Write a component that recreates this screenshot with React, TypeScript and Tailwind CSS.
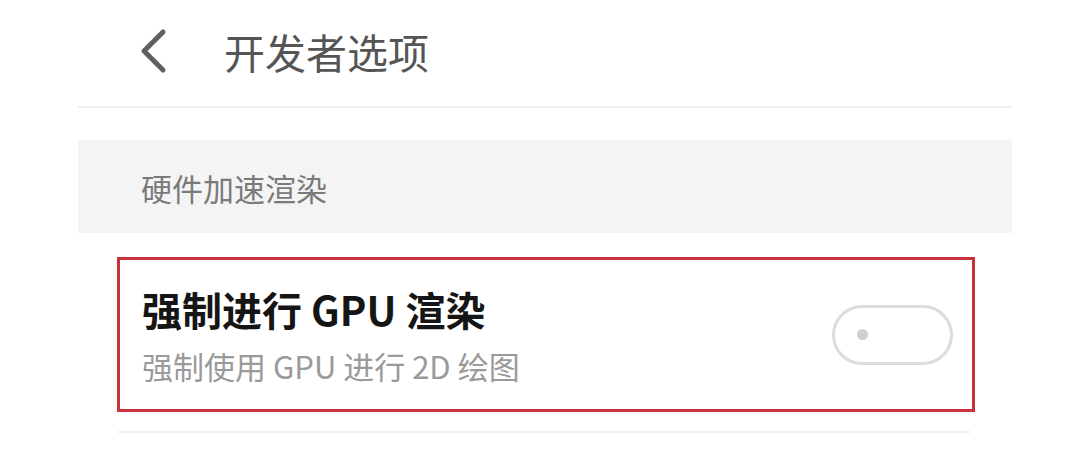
export default function App() {
  return (
    <div
      className="w-[1080px] h-[460px] bg-white overflow-hidden"
      style={{ fontFamily: '"Noto Sans CJK SC", "Noto Sans", sans-serif' }}
    >
      <div className="ml-[78px] w-[934px]">
        {/* Header */}
        <div className="h-[108px] flex items-center pl-[60px] pb-[4px] border-b-2 border-[#efefef]">
          <svg width="30" height="46" viewBox="0 0 30 46" className="shrink-0">
            <path d="M25 4 L6 23 L25 42" fill="none" stroke="#5f5f5f" strokeWidth="5" strokeLinecap="round" strokeLinejoin="round" />
          </svg>
          <h1 className="ml-[56px] text-[41px] leading-none text-[#555]">开发者选项</h1>
        </div>

        {/* Section header */}
        <div className="mt-[32px] h-[93px] bg-[#f4f4f4] flex items-center pl-[63px] pt-[2px]">
          <span className="text-[31px] leading-none text-[#7a7a7a]">硬件加速渲染</span>
        </div>

        {/* Highlighted row */}
        <div className="ml-[39px] mr-[37px] mt-[24px] h-[155px] border-[3px] border-[#c9313c] flex items-center justify-between pl-[22px] pr-[19px]">
          <div className="flex flex-col">
            <span className="text-[40px] leading-none font-bold text-[#151515]">强制进行 GPU 渲染</span>
            <span className="text-[31px] leading-none text-[#9a9a9a] mt-[21px]">强制使用 GPU 进行 2D 绘图</span>
          </div>
          <div className="w-[121px] h-[60px] rounded-full border-[3px] border-[#dcdcdc] flex items-center pl-[22px]">
            <div className="w-[11px] h-[11px] rounded-full bg-[#cfcfcf]" />
          </div>
        </div>

        {/* Bottom divider */}
        <div className="ml-[40px] mr-[42px] mt-[19px] h-[2px] bg-[#efefef]" />
      </div>
    </div>
  );
}
